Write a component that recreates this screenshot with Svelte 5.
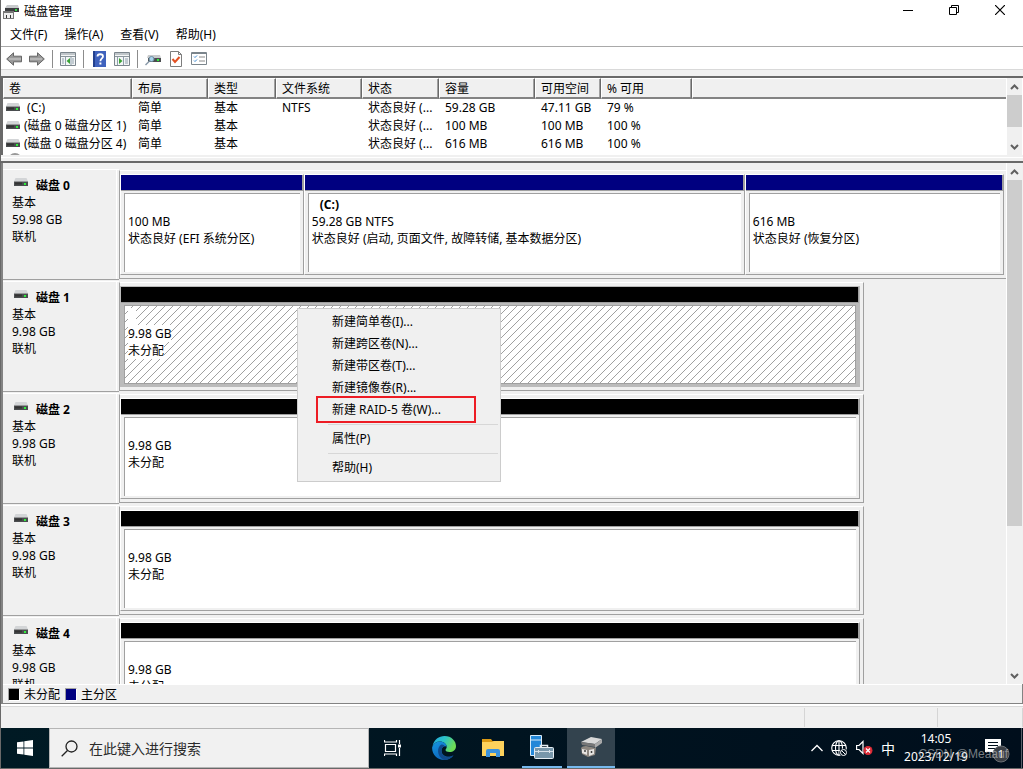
<script lang="ts">
  type Partition = { name?: string; size: string; status: string; weight: number };
  type Disk = { name: string; size: string; allocated: boolean; selected?: boolean; partitions: Partition[] };

  const menus = ['文件(F)', '操作(A)', '查看(V)', '帮助(H)'];

  const columns = [
    { label: '卷', width: 129 },
    { label: '布局', width: 76 },
    { label: '类型', width: 68 },
    { label: '文件系统', width: 86 },
    { label: '状态', width: 77 },
    { label: '容量', width: 96 },
    { label: '可用空间', width: 66 },
    { label: '% 可用', width: 91 }
  ];

  const volumes = [
    [' (C:)', '简单', '基本', 'NTFS', '状态良好 (...', '59.28 GB', '47.11 GB', '79 %'],
    ['(磁盘 0 磁盘分区 1)', '简单', '基本', '', '状态良好 (...', '100 MB', '100 MB', '100 %'],
    ['(磁盘 0 磁盘分区 4)', '简单', '基本', '', '状态良好 (...', '616 MB', '616 MB', '100 %']
  ];

  const empty: Partition = { size: '9.98 GB', status: '未分配', weight: 1 };

  const disks: Disk[] = [
    {
      name: '磁盘 0',
      size: '59.98 GB',
      allocated: true,
      partitions: [
        { size: '100 MB', status: '状态良好 (EFI 系统分区)', weight: 183 },
        { name: '(C:)', size: '59.28 GB NTFS', status: '状态良好 (启动, 页面文件, 故障转储, 基本数据分区)', weight: 442 },
        { size: '616 MB', status: '状态良好 (恢复分区)', weight: 259 }
      ]
    },
    { name: '磁盘 1', size: '9.98 GB', allocated: false, selected: true, partitions: [empty] },
    { name: '磁盘 2', size: '9.98 GB', allocated: false, partitions: [empty] },
    { name: '磁盘 3', size: '9.98 GB', allocated: false, partitions: [empty] },
    { name: '磁盘 4', size: '9.98 GB', allocated: false, partitions: [empty] }
  ];

  // null is a separator
  const contextItems = [
    '新建简单卷(I)...',
    '新建跨区卷(N)...',
    '新建带区卷(T)...',
    '新建镜像卷(R)...',
    '新建 RAID-5 卷(W)...',
    null,
    '属性(P)',
    null,
    '帮助(H)'
  ];
</script>

{#snippet driveIcon()}
  <svg viewBox="0 0 14 8" width="14" height="8" aria-hidden="true">
    <path d="M1.5 0h11L14 3.5H0z" fill="#d3d5d7" />
    <rect y="3.5" width="14" height="4.5" fill="#4a4d4f" />
    <rect x="1" y="4.5" width="7" height="2" fill="#333" />
    <rect x="10" y="5" width="2" height="2" fill="#2ff03c" />
  </svg>
{/snippet}

{#snippet scrollbar(size: number)}
  <div class="scrollbar">
    <button aria-label="向上滚动">
      <svg viewBox="0 0 9 6" width="9" height="6"><path d="M1 5l3.5-3.5L8 5" fill="none" stroke="#606060" stroke-width="2" /></svg>
    </button>
    <div class="track"><div class="thumb" style="height: {size}%"></div></div>
    <button aria-label="向下滚动">
      <svg viewBox="0 0 9 6" width="9" height="6"><path d="M1 1l3.5 3.5L8 1" fill="none" stroke="#606060" stroke-width="2" /></svg>
    </button>
  </div>
{/snippet}

<div class="screen">
  <header class="titlebar">
    <svg viewBox="0 0 16 16" width="16" height="16" aria-hidden="true">
      <path d="M4 1h11l1 3H2z" fill="#c8cacc" />
      <path d="M2 4h14v4H2z" fill="#3b3d3f" />
      <rect x="12" y="5" width="2" height="2" fill="#39d94a" />
      <path d="M0 7h11v8H0z" fill="#777" />
      <path d="M1 9h9v5H1z" fill="#eee" />
      <path d="M3 11h1v3H3zM7 11h1v3H7z" fill="#333" />
    </svg>
    <h1>磁盘管理</h1>
    <div class="window-buttons">
      <button aria-label="最小化"><svg viewBox="0 0 10 10" width="10" height="10"><path d="M0 5.5h10" stroke="#000" /></svg></button>
      <button aria-label="还原">
        <svg viewBox="0 0 10 10" width="10" height="10"><path d="M.5 2.5h7v7h-7zM2.5 2.5v-2h7v7h-2" fill="none" stroke="#000" /></svg>
      </button>
      <button aria-label="关闭"><svg viewBox="0 0 10 10" width="10" height="10"><path d="M0 0l10 10M10 0L0 10" stroke="#000" stroke-width="1.2" /></svg></button>
    </div>
  </header>

  <nav class="menubar">
    {#each menus as menu}
      <button>{menu}</button>
    {/each}
  </nav>

  <div class="toolbar">
    <button aria-label="后退">
      <svg viewBox="0 0 16 14" width="16" height="14"><path d="M.7 7L7.5.8v3.4h8v5.6h-8v3.4z" fill="#999" stroke="#666" /><path d="M3 7h12" stroke="#b5b5b5" stroke-width="2" /></svg>
    </button>
    <button aria-label="前进">
      <svg viewBox="0 0 16 14" width="16" height="14"><path d="M15.3 7L8.5.8v3.4h-8v5.6h8v3.4z" fill="#999" stroke="#666" /><path d="M1 7h12" stroke="#b5b5b5" stroke-width="2" /></svg>
    </button>
    <span class="divider"></span>
    <button aria-label="显示控制台树">
      <svg viewBox="0 0 16 14" width="16" height="14">
        <path d="M.5.5h15v13H.5z" fill="#f4f6f7" stroke="#7b858c" />
        <path d="M1 2h14M1 4.5h14" stroke="#8b959c" />
        <path d="M5.5 5v8M2 7h2M2 9h2M2 11h2M12 7h2M12 9h2M12 11h2M11 5v8" stroke="#8fa0ac" />
        <path d="M10 6v6L6.5 9z" fill="#3aa335" />
      </svg>
    </button>
    <span class="divider"></span>
    <button aria-label="帮助">
      <svg viewBox="0 0 13 16" width="13" height="16">
        <path d="M0 0h13v16H0z" fill="#3f62bd" /><path d="M0 0h2v16H0z" fill="#23418f" />
        <path d="M4.5 5.5C4.5 2.5 10 2.5 10 5.5c0 2-2.6 2-2.6 4.8" fill="none" stroke="#fff" stroke-width="1.8" />
        <rect x="6.4" y="11.5" width="2" height="2" fill="#fff" />
      </svg>
    </button>
    <button aria-label="显示操作窗格">
      <svg viewBox="0 0 16 14" width="16" height="14">
        <path d="M.5.5h15v13H.5z" fill="#f4f6f7" stroke="#7b858c" />
        <path d="M1 2h14M1 4.5h14" stroke="#8b959c" />
        <path d="M3.5 5v8M9.5 5v8M11 7h3M11 9h3M11 11h3" stroke="#8fa0ac" />
        <path d="M5 6v6l3.5-3z" fill="#3aa335" />
      </svg>
    </button>
    <span class="divider"></span>
    <button aria-label="重新扫描磁盘">
      <svg viewBox="0 0 16 14" width="16" height="14">
        <path d="M3 3h12l1 3H2z" fill="#c8cacc" /><path d="M3 6h13v4H3z" fill="#4a4d4f" />
        <rect x="12" y="7" width="2" height="2" fill="#2ff03c" />
        <path d="M4.5 9L.5 13" stroke="#8899a8" stroke-width="1.5" />
        <circle cx="6.5" cy="7" r="2.5" fill="#a9d3ec" stroke="#6e8ba0" />
      </svg>
    </button>
    <button aria-label="属性">
      <svg viewBox="0 0 12 16" width="12" height="16">
        <path d="M.5.5h8l3 3v12H.5z" fill="#fff" stroke="#7d7d7d" /><path d="M8.5.5v3h3" fill="none" stroke="#7d7d7d" />
        <path d="M2.5 8L5 11l4.500-5" fill="none" stroke="#e35022" stroke-width="2" />
      </svg>
    </button>
    <button aria-label="更多操作">
      <svg viewBox="0 0 16 13" width="16" height="13">
        <path d="M.5.5h15v12H.5z" fill="#fff" stroke="#7b858c" /><path d="M1 1.5h14" stroke="#7b858c" />
        <path d="M3 4.5l1 1 2-2M3 8.5l1 1 2-2" fill="none" stroke="#3988d2" /><path d="M8 5h6M8 9h6" stroke="#8a8a8a" />
      </svg>
    </button>
  </div>

  <main class="console">
    <section class="volume-pane">
      <div class="volume-list">
        <table>
          <colgroup>
            {#each columns as column}
              <col style="width: {column.width}px" />
            {/each}
            <col />
          </colgroup>
          <thead>
            <tr>
              {#each columns as column}
                <th>{column.label}</th>
              {/each}
              <th class="filler"></th>
            </tr>
          </thead>
          <tbody>
            {#each volumes as volume}
              <tr>
                {#each volume as value, i}
                  <td>
                    {#if i === 0}
                      <span class="volume-name">{@render driveIcon()}{value}</span>
                    {:else}
                      {value}
                    {/if}
                  </td>
                {/each}
                <td></td>
              </tr>
            {/each}
            <tr>
              <td colspan="9">
                <span class="volume-name">
                  <svg viewBox="0 0 14 16" width="14" height="16" aria-hidden="true"><circle cx="9" cy="7" r="6" fill="#ddd" stroke="#999" stroke-width="2" /></svg>
                </span>
              </td>
            </tr>
          </tbody>
        </table>
      </div>
      {@render scrollbar(75)}
    </section>

    <div class="splitter"></div>

    <section class="disk-pane">
      <div class="disk-list">
        {#each disks as disk}
          <article class="disk">
            <div class="disk-label">
              <h2>{@render driveIcon()}{disk.name}</h2>
              <p>基本</p>
              <p>{disk.size}</p>
              <p>联机</p>
            </div>
            <div class="graph-area">
              <div class="graph" class:allocated={disk.allocated}>
                {#each disk.partitions as partition}
                  <div class="partition" class:selected={disk.selected} style="flex-grow: {partition.weight}">
                    <div class="bar"></div>
                    <div class="body">
                      <div class="box">
                        <p class="name"><span>{partition.name ?? '\u00a0'}</span></p>
                        <p><span>{partition.size}</span></p>
                        <p><span>{partition.status}</span></p>
                      </div>
                    </div>
                  </div>
                {/each}
              </div>
            </div>
          </article>
        {/each}
      </div>
      {@render scrollbar(71)}
    </section>

    <div class="legend">
      <span class="swatch"></span>未分配
      <span class="swatch primary"></span>主分区
    </div>
  </main>

  <div class="statusbar"><span></span><span></span><span></span></div>

  <footer class="taskbar">
    <button class="start" aria-label="开始">
      <svg viewBox="0 0 16 16" width="16" height="16"><path d="M0 2.3l6.500-.9v6.200H0zM7.300 1.300L16 0v7.600H7.300zM0 8.400h6.500v6.200L0 13.700zM7.300 8.400H16V16l-8.700-1.300z" fill="#fff" /></svg>
    </button>
    <label class="search">
      <svg viewBox="0 0 17 17" width="17" height="17" aria-hidden="true"><circle cx="10.5" cy="6.5" r="5.5" fill="none" stroke="#222" stroke-width="1.3" /><path d="M6.5 10.5L.7 16.3" stroke="#222" stroke-width="1.3" /></svg>
      <input type="text" placeholder="在此键入进行搜索" aria-label="搜索" />
    </label>
    <div class="apps">
      <button aria-label="任务视图">
        <svg viewBox="0 0 18 16" width="18" height="16">
          <path d="M1.5 4.500h10v7h-10zM.5 0v2.500M12.500 0v2.500M.5 2h12M.5 16v-2.500M12.500 16v-2.500M.5 14h12M15.500 0v4M15.500 8v8" fill="none" stroke="#fff" stroke-width="1.2" />
          <path d="M14 4.500h3v3h-3z" fill="#fff" />
        </svg>
      </button>
      <button class="edge" aria-label="Microsoft Edge">
        <svg viewBox="0 0 24 24" width="24" height="24">
          <defs>
            <linearGradient id="edge-top" x1="0" y1="0" x2="1" y2="0.4"><stop offset="0" stop-color="#22a5df" /><stop offset="0.5" stop-color="#2bc3c9" /><stop offset="1" stop-color="#6ddc55" /></linearGradient>
            <linearGradient id="edge-left" x1="0" y1="0" x2="0.6" y2="1"><stop offset="0" stop-color="#1595e0" /><stop offset="1" stop-color="#0c62b8" /></linearGradient>
          </defs>
          <path d="M.5 10C2 3.500 7 0 12.500 0 19.500 0 24 5 24 10c0 4-3 6-6.500 6-2.500 0-4-1-4-2 0-.8 1.200-1.200 1.200-3.200C14.700 8 11.500 5.500 8 5.500c-3.500 0-6 2-7.500 4.500z" fill="url(#edge-top)" />
          <path d="M.2 11C1.500 7.500 4.500 5.500 8 5.500c3.500 0 6.700 2.400 6.700 5.200-1-1.200-5.200-.5-5.200 4 0 5 6 8 12 4.500-2 3-5.500 4.800-9.500 4.800C5 24-.6 18 .2 11z" fill="url(#edge-left)" />
          <path d="M9.500 8.500C5 10.500 4 20 12 24c4 0 7.500-1.800 9.500-4.800-6 3.500-12 .5-12-4.500 0-2.500 1.500-4 3.200-4.400-.6-1.200-1.700-2-3.200-1.800z" fill="#114a8b" />
        </svg>
      </button>
      <button aria-label="文件资源管理器">
        <svg viewBox="0 0 22 18" width="22" height="18">
          <path d="M0 0h9l1.500 2H21v4H0z" fill="#dc9a14" /><path d="M0 3h10l2-1h10v15H0z" fill="#fdd25c" />
          <path d="M4 18v-6q0-2 2-2h10q2 0 2 2v6h-4v-4H8v4z" fill="#3b92dc" />
        </svg>
      </button>
      <button class="running" aria-label="服务器管理器">
        <svg viewBox="0 0 24 24" width="24" height="24">
          <path d="M.5.5h11v20H.5z" fill="#2488d8" stroke="#d8ebf8" /><path d="M1 5h10" stroke="#d8ebf8" />
          <path d="M10.500 13v-2.500h7V13" fill="none" stroke="#e5edf2" stroke-width="1.5" />
          <rect x="4.5" y="12.5" width="19" height="11" rx="1" fill="#7897aa" stroke="#e5edf2" />
          <path d="M5 16.500h18M8.500 15v3M19.500 15v3" stroke="#d4e0e8" />
        </svg>
      </button>
      <button class="running current" aria-label="磁盘管理">
        <svg viewBox="0 0 24 22" width="24" height="22">
          <path d="M2 6l10-5 11 2-7 5z" fill="#d8d8d8" /><path d="M2 6l14 2v3L3 9z" fill="#777" /><path d="M16 8l7-5v4l-7 5z" fill="#aaa" />
          <path d="M2 12q1-2 5-2l10 2-1 7-7 2-6-3z" fill="#8d8780" />
          <path d="M3 13l5 1v5l-5-2zM10 14l5-1v5l-5 2z" fill="#e6e4e1" />
          <path d="M6 14v2M12.500 15v2" stroke="#444" stroke-width="1.5" />
        </svg>
      </button>
    </div>
    <div class="tray">
      <button aria-label="显示隐藏的图标"><svg viewBox="0 0 12 8" width="12" height="8"><path d="M.5 7L6 1.500 11.500 7" fill="none" stroke="#fff" stroke-width="1.3" /></svg></button>
      <button aria-label="网络">
        <svg viewBox="0 0 17 17" width="17" height="17">
          <g fill="none" stroke="#fff" stroke-width="1.1"><circle cx="8" cy="8" r="7.3" /><ellipse cx="8" cy="8" rx="3.5" ry="7.3" /><path d="M8 1v14M1 5.500h14M1 10.500h14" /></g>
          <circle cx="12.5" cy="12.5" r="4" fill="#000f1c" /><circle cx="12.5" cy="12.5" r="3" fill="none" stroke="#fff" /><path d="M10.500 10.500l4 4" stroke="#fff" />
        </svg>
      </button>
      <button aria-label="音量">
        <svg viewBox="0 0 17 16" width="17" height="16">
          <path d="M.6 5.500H3l4-4v12l-4-4H.6z" fill="none" stroke="#fff" stroke-width="1.2" />
          <circle cx="12" cy="10.500" r="4.5" fill="#dc2a35" /><path d="M10 8.500l4 4M14 8.500l-4 4" stroke="#fff" stroke-width="1.2" />
        </svg>
      </button>
      <button class="ime">中</button>
      <button class="clock"><time>14:05</time><time>2023/12/19</time></button>
      <button class="notifications" aria-label="通知">
        <svg viewBox="0 0 26 26" width="26" height="26">
          <path d="M1 1h16v13h-5v4l-4-4H1z" fill="#fff" /><path d="M4 4.500h10M4 7.500h10M4 10.500h10" stroke="#000f1c" />
          <circle cx="17" cy="16" r="8" fill="#3c4046" stroke="#6b6f74" />
          <text x="17" y="20" text-anchor="middle" font-size="11" fill="#fff">1</text>
        </svg>
      </button>
    </div>
  </footer>

  <div class="context-menu" role="menu">
    {#each contextItems as item, i}
      {#if item}
        <button role="menuitem" class:marked={i === 4}>{item}</button>
      {:else}
        <hr />
      {/if}
    {/each}
  </div>

  <div class="watermark">CSDN @Meaauf</div>
</div>

<style>
  :global(body) {
    margin: 0;
  }
  .screen {
    position: relative;
    display: flex;
    flex-direction: column;
    box-sizing: border-box;
    height: 100vh;
    overflow: hidden;
    border-left: 1px solid #696969;
    border-bottom: 1px solid #696969;
    background: #fff;
    color: #000;
    font: 12px/17px "Noto Sans", "Noto Sans CJK SC", sans-serif;
  }
  button {
    display: flex;
    align-items: center;
    justify-content: center;
    padding: 0;
    border: 0;
    background: none;
    color: inherit;
    font: inherit;
  }
  h1,
  h2,
  p {
    margin: 0;
    font-size: 12px;
    line-height: 17px;
  }
  svg {
    display: block;
    flex: none;
  }
  .titlebar {
    display: flex;
    align-items: center;
    gap: 5px;
    height: 23px;
    padding-left: 2px;
  }
  .titlebar h1 {
    flex: 1;
    font-weight: normal;
  }
  .window-buttons {
    display: flex;
    align-self: flex-start;
  }
  .window-buttons button {
    width: 46px;
    height: 20px;
  }
  .menubar {
    display: flex;
    gap: 1px;
    height: 22px;
    padding: 0 0 1px 1px;
    border-bottom: 1px solid #a9a9a9;
  }
  .menubar button {
    padding: 0 8px;
  }
  .toolbar {
    display: flex;
    align-items: center;
    height: 21px;
    padding: 1px 0 0 5px;
    gap: 7px;
    border-bottom: 1px solid #d9d9d9;
  }
  .divider {
    width: 1px;
    height: 18px;
    background: #8c8c8c;
  }
  .toolbar button {
    min-width: 16px;
  }

  /* console panes */
  .console {
    display: flex;
    flex: 1;
    flex-direction: column;
    min-height: 0;
    padding-top: 6px;
    background: #f0f0f0;
  }
  .volume-pane {
    display: flex;
    height: 77px;
    border-top: 2px solid #696969;
    border-left: 2px solid #696969;
    background: #fff;
  }
  .volume-list {
    flex: 1;
    min-width: 0;
    overflow: hidden;
  }
  table {
    width: 100%;
    table-layout: fixed;
    border-spacing: 0;
  }
  th {
    box-sizing: border-box;
    height: 21px;
    padding: 0 0 0 5px;
    border: 1px solid #fff;
    border-right-color: #696969;
    border-bottom: 2px solid #838383;
    background: #f0f0f0;
    box-shadow: inset -1px 0 #a0a0a0;
    font-weight: normal;
    text-align: left;
  }
  th.filler {
    border-right: 0;
    box-shadow: none;
  }
  td {
    height: 18px;
    padding: 0 0 0 6px;
    line-height: 18px;
    white-space: nowrap;
  }
  td:first-child {
    padding-left: 3px;
  }
  .volume-name {
    display: flex;
    align-items: center;
    gap: 4px;
    white-space: pre;
  }
  .volume-name :global(svg) {
    margin-bottom: 2px;
  }
  .splitter {
    height: 3px;
    margin-top: 2px;
    border-top: 1px solid #fff;
    border-bottom: 2px solid #696969;
    background: #f0f0f0;
  }
  .disk-pane {
    display: flex;
    flex: 1;
    min-height: 0;
    border-left: 2px solid #838383;
  }
  .disk-list {
    flex: 1;
    min-width: 0;
    padding-top: 6px;
    overflow: hidden;
  }
  .disk {
    display: flex;
    margin-bottom: 1px;
  }
  .disk-label {
    box-sizing: border-box;
    width: 116px;
    height: 111px;
    flex: none;
    padding: 7px 0 0 9px;
    border-top: 1px solid #fff;
    border-bottom: 1px solid #a0a0a0;
    box-shadow: inset -2px 0 #f0f0f0, inset -3px 0 #fff;
  }
  .disk-label h2 {
    display: flex;
    gap: 8px;
    padding-left: 2px;
  }
  .disk-label h2 :global(svg) {
    margin-top: 1px;
  }
  .graph-area {
    flex: 1;
    min-width: 0;
    padding-top: 1px;
  }
  .graph {
    display: flex;
    box-sizing: border-box;
    width: 84%;
    padding: 3px 3px 3px 0;
    border: 1px solid #a0a0a0;
    border-top-color: #fff;
  }
  .graph.allocated {
    width: 100%;
    padding-right: 2px;
    border-right: 0;
  }
  .partition {
    display: flex;
    flex: 1 1 0;
    flex-direction: column;
    box-sizing: border-box;
    min-width: 0;
    height: 101px;
    border: 1px solid #a0a0a0;
    border-top-color: #fff;
    border-left-color: #fff;
  }
  .bar {
    height: 15px;
    border-right: 1px solid #a0a0a0;
    border-bottom: 1px solid #a0a0a0;
    background: #000;
  }
  .allocated .bar {
    background: #000080;
  }
  .body {
    display: flex;
    flex: 1;
    padding: 2px 3px;
  }
  .box {
    flex: 1;
    min-width: 0;
    overflow: hidden;
    padding: 2px 0 0 3px;
    border-top: 1px solid #a0a0a0;
    border-left: 1px solid #a0a0a0;
    background: #fff;
    white-space: nowrap;
  }
  .box .name {
    padding-left: 8px;
    font-weight: bold;
  }
  .selected {
    border-color: #bbb;
  }
  .selected .body {
    background: #bbb;
  }
  .selected .box {
    border: 1px solid #a0a0a0;
    background: #fff url("data:image/svg+xml,%3Csvg xmlns='http://www.w3.org/2000/svg' width='8' height='8'%3E%3Cpath d='M7 0h1v1H7zM6 1h1v1H6zM5 2h1v1H5zM4 3h1v1H4zM3 4h1v1H3zM2 5h1v1H2zM1 6h1v1H1zM0 7h1v1H0z' fill='%23a0a0a0'/%3E%3C/svg%3E");
  }
  .selected .name {
    padding-left: 0;
  }
  .selected span {
    display: inline-block;
    background: #fff;
  }
  .selected .name span {
    width: 8px;
  }

  .scrollbar {
    display: flex;
    flex-direction: column;
    width: 15px;
    margin-right: 1px;
    border-left: 1px solid #fff;
    background: #f0f0f0;
  }
  .scrollbar button {
    height: 17px;
  }
  .track {
    flex: 1;
  }
  .thumb {
    background: #cdcdcd;
  }
  .legend {
    display: flex;
    align-items: center;
    gap: 4px;
    height: 18px;
    padding: 1px 0 0 5px;
    border: 2px solid #838383;
    border-width: 0 1px 1px 2px;
    box-shadow: inset 0 1px #fff;
  }
  .swatch {
    box-sizing: border-box;
    width: 12px;
    height: 13px;
    border: 1px solid #fff;
    border-top-color: #a0a0a0;
    border-left-color: #a0a0a0;
    background: #000;
  }
  .swatch.primary {
    margin-left: 1px;
    background: #000080;
  }
  .statusbar {
    display: flex;
    height: 21px;
    padding-top: 1px;
    border-top: 2px solid #fff;
    background: #f0f0f0;
    box-shadow: inset 0 1px #d9d9d9;
  }
  .statusbar span {
    width: 132px;
    margin: 1px 0;
    border-right: 1px solid #d5d5d5;
  }
  .statusbar span:first-child {
    flex: 1;
  }
  .statusbar span:last-child {
    width: 84px;
  }

  .taskbar {
    display: flex;
    height: 40px;
    background: linear-gradient(90deg, #001a24, #000e1c);
    color: #fff;
  }
  .start {
    width: 48px;
  }
  .search {
    display: flex;
    align-items: center;
    gap: 11px;
    box-sizing: border-box;
    width: 320px;
    padding-left: 11px;
    border: 1px solid #b5b5b5;
    background: #f1f1f1;
  }
  .search input {
    flex: 1;
    min-width: 0;
    padding: 2px 0 0;
    border: 0;
    outline: 0;
    background: none;
    font: 14px/20px "Noto Sans", "Noto Sans CJK SC", sans-serif;
  }
  .search input::placeholder {
    color: #2b2b2b;
    opacity: 1;
  }
  .apps {
    display: flex;
    flex: 1;
    gap: 1px;
  }
  .apps button {
    box-sizing: border-box;
    width: 48px;
  }
  .apps .edge {
    margin-left: 2px;
  }
  .apps .running {
    border-bottom: 2px solid #76b9ed;
    width: 40px;
    margin: 0 4px;
  }
  .apps .running.current {
    width: 48px;
    margin: 0;
    background: #33434e;
  }
  .tray {
    display: flex;
    gap: 8px;
    padding-right: 1px;
    border-right: 1px solid #596069;
    margin-right: 1px;
  }
  .ime {
    font-size: 14px;
  }
  .clock {
    flex-direction: column;
    min-width: 66px;
  }
  .clock time {
    line-height: 18px;
  }
  .notifications {
    width: 43px;
    padding: 6px 4px 0 0;
  }

  /* opened over the selected disk */
  .context-menu {
    position: absolute;
    top: 308px;
    left: 296px;
    box-sizing: border-box;
    width: 204px;
    padding: 2px;
    border: 1px solid #ccc;
    background: #f0f0f0;
  }
  .context-menu button {
    position: relative;
    justify-content: flex-start;
    width: 100%;
    height: 22px;
    padding: 0 0 2px 32px;
  }
  .context-menu hr {
    height: 1px;
    margin: 3px 0 3px 28px;
    border: 0;
    background: #d7d7d7;
  }
  .marked::after {
    content: "";
    position: absolute;
    inset: -3px 22px -2px 16px;
    border: 2px solid #ed1c24;
  }
  .watermark {
    position: absolute;
    right: 15px;
    bottom: 6px;
    color: rgba(200, 200, 200, 0.6);
    font: 12px/16px "Liberation Sans", sans-serif;
  }
</style>
